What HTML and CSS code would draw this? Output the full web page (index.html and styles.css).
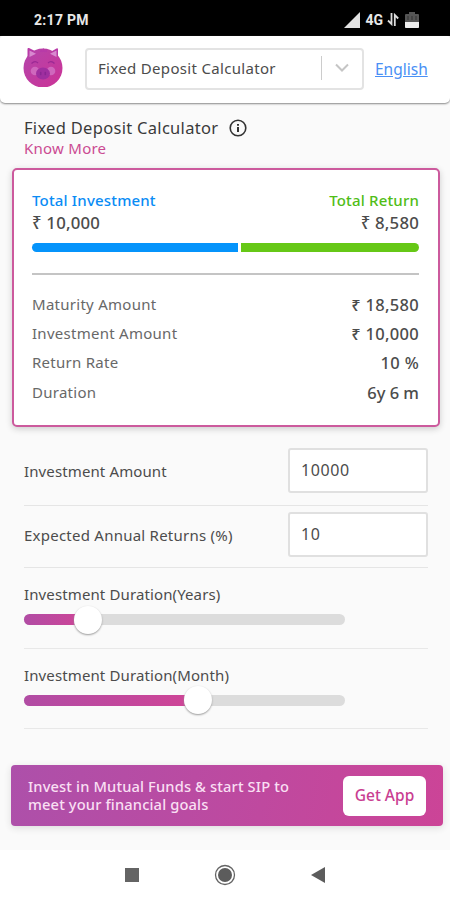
FILE: index.html
```html
<!DOCTYPE html>
<html lang="en">
<head>
<meta charset="utf-8">
<meta name="viewport" content="width=device-width, initial-scale=1">
<title>Fixed Deposit Calculator</title>
<link rel="stylesheet" href="styles.css">
</head>
<body>
<div class="status">
  <span class="clock">2:17 PM</span>
  <svg class="signal" width="17" height="16" viewBox="0 0 17 16"><path d="M16 0v16H0z" fill="#e2e2e2"/></svg>
  <span class="net">4G</span>
  <svg class="data" width="12" height="13" viewBox="0 0 12 13" fill="none" stroke="#ddd" stroke-width="1.8"><path d="M4.500 0v11L1 7.500M7.800 13V2l3.400 3.500"/></svg>
  <svg class="battery" width="14" height="16" viewBox="0 0 14 16"><path d="M4 0h6v2h3a1 1 0 0 1 1 1v12a1 1 0 0 1-1 1H1a1 1 0 0 1-1-1V3a1 1 0 0 1 1-1h3z" fill="#555"/><path d="M3 4v4M7 4v4M11 4v4" stroke="#333"/><path d="M0 10h14v5a1 1 0 0 1-1 1H1a1 1 0 0 1-1-1z" fill="#eee"/></svg>
</div>
<header class="header">
  <svg class="logo" width="40" height="40" viewBox="0 0 40 40">
    <defs><linearGradient id="pig" x1="0" y1="0" x2="1" y2="1"><stop offset="0" stop-color="#b445ac"/><stop offset="1" stop-color="#cc3396"/></linearGradient></defs>
    <path d="M4.500 13V2q0-1.500 1.500-1l8 4 3-.5.500-2 1.500 1.500 1-2.500 1.500 2.500 1.500-1.500.5 2.500 3 .5 7-4q1.500-.6 1.500 1v10z" fill="#b83aa8"/>
    <circle cx="20" cy="21" r="19.500" fill="url(#pig)"/>
    <path d="M6.500 10V3.500L13 6.800zM33.500 10V3.500L27 6.800z" fill="#d889d0"/>
    <path d="M17 5l1-3 1.500 2 1-3 1.500 3 1.500-2 .5 3z" fill="#b83aa8"/>
    <circle cx="12" cy="24" r="4.300" fill="#cf68bd"/><circle cx="28" cy="24" r="4.300" fill="#cf68bd"/>
    <ellipse cx="20" cy="26.500" rx="7" ry="6" fill="#9f2fa0"/>
    <path d="M17.700 25.500v2M22.300 25.500v2" stroke="#8a2692" stroke-width="1.600" stroke-linecap="round"/>
    <path d="M8.500 16.500q3.500-3.500 6.500-.5M25 16q3-3 6.500.5" fill="none" stroke="#9a2994" stroke-width="1.200"/>
  </svg>
  <div class="select">
    <span class="select-text">Fixed Deposit Calculator</span>
    <span class="select-arrow"><svg width="14" height="9" viewBox="0 0 14 9"><path d="M1 1.500l6 6 6-6" fill="none" stroke="#c5c5c5" stroke-width="2"/></svg></span>
  </div>
  <a class="lang">English</a>
</header>
<main class="main">
  <div class="title"><h1>Fixed Deposit Calculator</h1>
    <svg width="18" height="18" viewBox="0 0 18 18"><circle cx="9" cy="9" r="7.800" fill="none" stroke="#333" stroke-width="1.600"/><path d="M9 5v1.800M9 8v5" stroke="#333" stroke-width="2"/></svg>
  </div>
  <a class="know">Know More</a>
  <section class="card">
    <div class="totals">
      <div><div class="label invest">Total Investment</div><div class="sum">₹ 10,000</div></div>
      <div class="right"><div class="label return">Total Return</div><div class="sum">₹ 8,580</div></div>
    </div>
    <div class="bar"><i class="part-invest"></i><i class="part-return"></i></div>
    <dl class="details">
      <div><dt>Maturity Amount</dt><dd>₹ 18,580</dd></div>
      <div><dt>Investment Amount</dt><dd>₹ 10,000</dd></div>
      <div><dt>Return Rate</dt><dd>10 %</dd></div>
      <div><dt>Duration</dt><dd class="period">6y 6 m</dd></div>
    </dl>
  </section>
  <div class="form">
    <div class="field"><span>Investment Amount</span><div class="input">10000</div></div>
    <div class="field"><span class="wide">Expected Annual Returns (%)</span><div class="input">10</div></div>
    <div class="range"><span>Investment Duration(Years)</span><div class="track"><i class="fill years"></i><i class="knob"></i></div></div>
    <div class="range"><span>Investment Duration(Month)</span><div class="track"><i class="fill months"></i><i class="knob"></i></div></div>
  </div>
  <aside class="promo"><div class="promo-text"><p>Invest in Mutual Funds &amp; start SIP to</p><p>meet your financial goals</p></div><div class="button">Get App</div></aside>
</main>
<nav class="nav">
  <svg width="14" height="14" viewBox="0 0 14 14"><path d="M0 0h14v14H0z" fill="#646464"/></svg>
  <svg width="22" height="22" viewBox="0 0 22 22"><circle cx="11" cy="11" r="9.500" fill="none" stroke="#646464" stroke-width="1.300"/><circle cx="11" cy="11" r="7" fill="#5c5c5c"/></svg>
  <svg width="14" height="16" viewBox="0 0 14 16"><path d="M14 0v16L0 8z" fill="#5c5c5c"/></svg>
</nav>
</body>
</html>
```
FILE: styles.css
```css
* { box-sizing: border-box; margin: 0; padding: 0; }
body { width: 450px; height: 900px; overflow: hidden; display: flex; flex-direction: column; background: #fafafa; color: #4c4c4c; font-family: "Noto Sans", "Liberation Sans", sans-serif; font-size: 15px; white-space: nowrap; }
svg { display: block; flex: none; }
i { display: block; }
.status { height: 36px; flex: none; background: #000; color: #e8e8e8; display: flex; align-items: center; padding: 3px 31px 0 34px; font: bold 14px Roboto, sans-serif; }
.clock { margin-right: auto; letter-spacing: .3px; }
.signal { margin-right: 1px; }
.net { margin-left: 3px; font: bold 14px Roboto, sans-serif; }
.data { margin-left: 4px; }
.battery { margin-left: 6px; }
.header { height: 67px; flex: none; background: #fff; border-radius: 2px 2px 5px 5px; box-shadow: 0 1px 2px #888; display: flex; align-items: center; padding: 0 22px 3px 23px; }
.logo { margin-bottom: 2px; }
.select { width: 279px; height: 42px; margin: 1px 0 0 22px; border: 2px solid #e3e3e3; border-radius: 4px; display: flex; align-items: center; padding: 0 0 2px 11px; }
.select-text { font-size: 15px; letter-spacing: .32px; }
.select-arrow { margin-left: auto; height: 24px; width: 41px; border-left: 1px solid #ccc; display: grid; place-items: center; }
.lang { margin-left: 11px; color: #4a90f5; text-decoration: underline; font-size: 15.500px; padding-top: 2px; }
.main { flex: 1; display: flex; flex-direction: column; padding: 13px 11px 0; }
.title { display: flex; align-items: center; gap: 11px; height: 23px; padding-left: 13px; }
h1 { font-size: 16.500px; font-weight: 400; color: #3a3a3a; letter-spacing: .3px; }
.know { padding-left: 13px; height: 20px; line-height: 18px; color: #cb4b92; letter-spacing: .25px; }
.card { margin: 9px 0 0 1px; width: 428px; height: 259px; background: #fff; border: 2px solid #cc5a9d; border-radius: 5px; box-shadow: 0 2px 6px #ccc; padding: 19px 19px 0 18px; }
.totals { display: flex; justify-content: space-between; }
.right { display: flex; flex-direction: column; align-items: flex-end; }
.label { height: 22px; line-height: 22px; font-weight: 500; letter-spacing: .17px; }
.invest { color: #0a8cf5; }
.return { color: #50bd17; }
.sum { font-size: 16.800px; line-height: 24px; font-weight: 500; letter-spacing: .2px; }
.bar { display: flex; gap: 3px; height: 9px; margin-top: 8px; }
.part-invest { width: 206px; background: #0594fb; border-radius: 5px 0 0 5px; }
.part-return { flex: 1; background: #66c816; border-radius: 0 5px 5px 0; }
.details { margin-top: 21px; padding-top: 14.500px; border-top: 2px solid #c4c4c4; }
.details div { height: 29.300px; display: flex; justify-content: space-between; align-items: center; }
dt { color: #686868; letter-spacing: .27px; padding-bottom: 1px; }
dd { font-size: 16.500px; font-weight: 500; letter-spacing: .3px; }
.period { letter-spacing: 0; }
.form { padding: 12px 11px 0 13px; letter-spacing: .12px; }
.field { display: flex; align-items: center; justify-content: space-between; height: 62px; padding-bottom: 4px; border-bottom: 1px solid #e5e5e5; }
.field:first-child { height: 67px; padding-bottom: 3px; }
.wide { letter-spacing: .24px; }
.input { width: 140px; height: 45px; background: #fff; border: 2px solid #e0e0e0; border-radius: 3px; padding: 0 11px; line-height: 40px; font-size: 16px; letter-spacing: .6px; }
.range { height: 80.500px; border-bottom: 1px solid #e8e8e8; padding-top: 16px; line-height: 20px; }
.track { width: 321px; height: 11px; margin-top: 10px; border-radius: 6px; background: #dcdcdc; display: flex; align-items: center; }
.fill { height: 11px; border-radius: 6px 0 0 6px; background: linear-gradient(90deg, #b14ca4, #d04496); }
.years { width: 64px; }
.months { width: 174px; }
.knob { width: 28px; height: 28px; flex: none; border-radius: 50%; background: #fff; margin-left: -14px; box-shadow: 0 1px 2px #999; }
.promo { width: 432px; height: 61px; margin-top: 36px; border-radius: 4px; background: linear-gradient(100deg, #ad50aa, #cc4497); box-shadow: 0 2px 7px #ddd; display: flex; align-items: center; justify-content: space-between; padding: 0 17px; }
.promo-text { color: #f9dff3; line-height: 17.500px; font-weight: 500; font-size: 14.700px; letter-spacing: .13px; }
.button { width: 83px; height: 40px; border-radius: 6px; background: #fff; color: #c93d91; text-align: center; line-height: 39px; font-weight: 500; font-size: 15.500px; }
.nav { height: 50px; flex: none; background: #fff; display: flex; align-items: center; padding: 0 125px; justify-content: space-between; }
```
